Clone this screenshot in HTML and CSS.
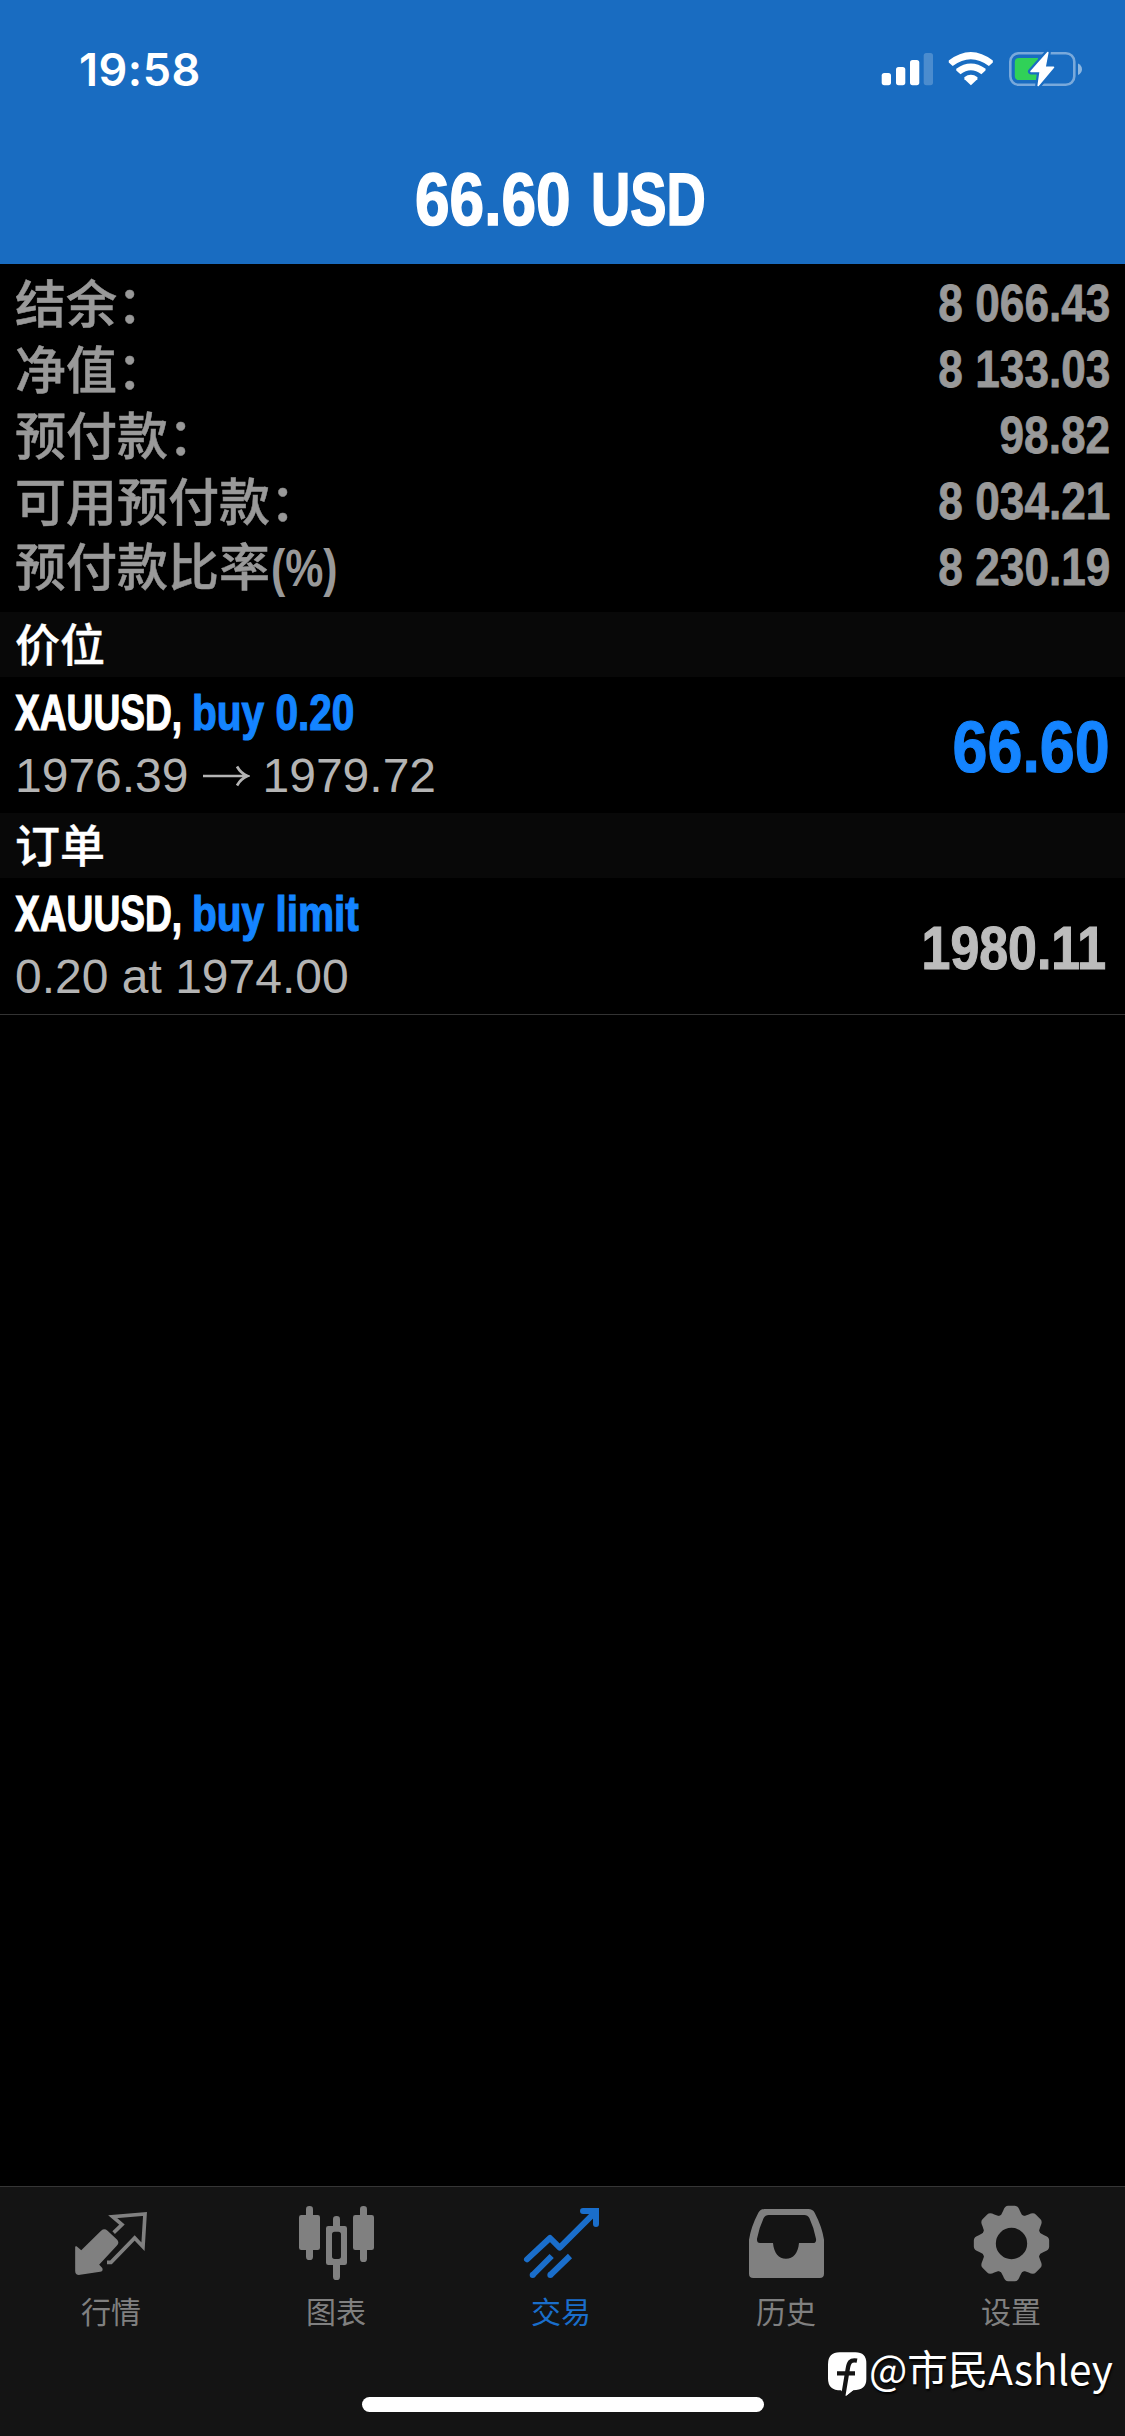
FILE: index.html
```html
<!DOCTYPE html>
<html lang="zh-CN">
<head>
<meta charset="utf-8">
<title>66.60 USD</title>
<link rel="stylesheet" href="styles.css">
</head>
<body>
<div class="screen">
  <header class="header">
    <div class="status">
      <span class="time">19:58</span>
      <svg class="status-icons" width="205" height="40" viewBox="880 49 205 40">
        <g fill="#fff">
          <rect x="881.700" y="73" width="9.300" height="12.200" rx="2.600"/>
          <rect x="896" y="67" width="9.300" height="18.200" rx="2.600"/>
          <rect x="910" y="60" width="9.300" height="25.200" rx="2.600"/>
          <rect x="923.700" y="53" width="9.300" height="32.200" rx="2.600" opacity=".22"/>
        </g>
        <g fill="#fff" transform="translate(970.800 0) scale(1.070 1) translate(-941.600 0)">
          <path d="M921 60.500Q941.600 43.500 962.200 60.500L962.200 62.500L958.500 66Q941.600 52.500 924.700 66L921 62.500Z"/>
          <path d="M928 68.800Q941.600 58 955.500 68.800L955.300 70.600L951.500 74.200Q941.600 66.500 932 74.200L928 70.600Z"/>
          <path d="M935.500 77.200Q941.600 72.300 947.900 77.200L947.700 79.300L941.700 85.300L935.700 79.300Z"/>
        </g>
        <rect x="1010.300" y="53.200" width="64" height="31.600" rx="8.500" fill="none" stroke="#fff" stroke-opacity=".42" stroke-width="2.600"/>
        <path d="M1078 63.500Q1082 65.500 1082 69.200T1078 75Z" fill="#fff" opacity=".5"/>
        <path d="M1019 58H1038V80H1019Q1014.800 80 1014.800 76V62Q1014.800 58 1019 58Z" fill="#30d158"/>
        <path d="M1047.800 52.500L1031 71.500H1040.200L1038.200 85.500L1053.500 67.300H1045Z" fill="#fff" stroke="#196cc1" stroke-width="6" stroke-linejoin="round"/>
        <path d="M1047.800 52.500L1031 71.500H1040.200L1038.200 85.500L1053.500 67.300H1045Z" fill="#fff" stroke="#fff" stroke-width="1.600" stroke-linejoin="round"/>
      </svg>
    </div>
    <h1 class="title"><span class="amount">66.60</span><span class="currency">USD</span></h1>
  </header>

  <main class="content">
    <dl class="summary">
      <div class="line"><dt>结余：</dt><dd>8 066.43</dd></div>
      <div class="line"><dt>净值：</dt><dd>8 133.03</dd></div>
      <div class="line"><dt>预付款：</dt><dd>98.82</dd></div>
      <div class="line"><dt>可用预付款：</dt><dd>8 034.21</dd></div>
      <div class="line"><dt>预付款比率<span class="unit">(%)</span></dt><dd>8 230.19</dd></div>
    </dl>

    <h2 class="section">价位</h2>
    <div class="row">
      <div class="info">
        <div class="name"><span class="symbol">XAUUSD,</span><span class="side">buy 0.20</span></div>
        <div class="detail"><span>1976.39</span><svg class="arrow" width="48" height="24" viewBox="0 0 48 24" fill="none" stroke="#b4b4b4" stroke-width="2.700"><path d="M1 12H45M35 2.500Q39 9.500 45.500 12Q39 14.500 35 21.500"/></svg><span>1979.72</span></div>
      </div>
      <div class="value profit">66.60</div>
    </div>

    <h2 class="section">订单</h2>
    <div class="row last">
      <div class="info">
        <div class="name"><span class="symbol">XAUUSD,</span><span class="side">buy limit</span></div>
        <div class="detail">0.20 at 1974.00</div>
      </div>
      <div class="value price">1980.11</div>
    </div>
  </main>

  <nav class="tabs">
    <div class="tab">
      <svg class="icon" viewBox="0 75 675 270">
        <path d="M228 231L244 244L305 184Q313 177 321 184L349 210Q356 217 349 225L294 284L305 296Q307 302 300 303L240 312Q228 314 228 303Z" fill="currentColor" stroke="currentColor" stroke-width="5" stroke-linejoin="round"/>
        <path d="M341 188L366 164L338 140L435 132L429 230L404 204L333 277H321" fill="none" stroke="currentColor" stroke-width="11"/>
      </svg>
      <span>行情</span>
    </div>
    <div class="tab">
      <svg class="icon" viewBox="675 75 675 270" fill="currentColor">
        <rect x="918" y="108" width="21" height="162" rx="10"/><rect x="897" y="135" width="63" height="105" rx="7"/>
        <rect x="1080" y="108" width="21" height="168" rx="10"/><rect x="1059" y="135" width="63" height="105" rx="7"/>
        <rect x="999" y="138" width="21" height="45" rx="10"/><rect x="999" y="270" width="21" height="60" rx="10"/>
        <path fill-rule="evenodd" d="M985 168H1034Q1041 168 1041 175V278Q1041 285 1034 285H985Q978 285 978 278V175Q978 168 985 168ZM1004 185Q996 185 996 193V259Q996 267 1004 267H1015Q1023 267 1023 259V193Q1023 185 1015 185Z"/>
      </svg>
      <span>图表</span>
    </div>
    <div class="tab active">
      <svg class="icon" viewBox="90 75 675 270" fill="none" stroke="currentColor" stroke-width="18">
        <path d="M321 268L390 204L419 233L522 130" stroke-linejoin="round" stroke-linecap="round"/>
        <path d="M489 123H528V162" stroke-linecap="round"/>
        <path d="M395 258L338 315M450 258L391 315"/>
        <g fill="currentColor" stroke="none"><circle cx="338" cy="315" r="9"/><circle cx="391" cy="315" r="9"/></g>
      </svg>
      <span>交易</span>
    </div>
    <div class="tab">
      <svg class="icon" viewBox="765 75 675 270" fill="currentColor">
        <path fill-rule="evenodd" d="M1034 117H1165Q1178 117 1184 128Q1206 170 1212 209V311Q1212 324 1199 324H1000Q987 324 987 311V209Q993 170 1015 128Q1021 117 1034 117ZM1046 135Q1036 135 1031 144Q1017 174 1011 206Q1010 219 1020 219H1059C1062 250 1076 266 1098 266S1134 250 1137 219H1179Q1190 219 1188 206Q1182 174 1168 144Q1163 135 1153 135Z"/>
      </svg>
      <span>历史</span>
    </div>
    <div class="tab">
      <svg class="icon" viewBox="360 75 675 270">
        <g transform="translate(694.500 220.500)" fill="currentColor">
          <circle r="69" fill="none" stroke="currentColor" stroke-width="44"/>
          <path id="tooth" d="M-38 -78Q-30 -85 -25 -98Q-20 -113 -10 -113H10Q20 -113 25 -98Q30 -85 38 -78Z"/>
          <use href="#tooth" transform="rotate(45)"/><use href="#tooth" transform="rotate(90)"/><use href="#tooth" transform="rotate(135)"/><use href="#tooth" transform="rotate(180)"/><use href="#tooth" transform="rotate(225)"/><use href="#tooth" transform="rotate(270)"/><use href="#tooth" transform="rotate(315)"/>
        </g>
      </svg>
      <span>设置</span>
    </div>
  </nav>

  <div class="watermark">
    <svg width="40" height="48" viewBox="140 545 120 144">
      <path d="M178 549H225Q258 549 258 582V630Q258 663 218 663L196 680L182 663Q143 663 143 628V585Q143 549 178 549Z" fill="#fff"/>
      <path d="M230 574C209 570 205 580 202 600L188 684M170 612H224" fill="none" stroke="#141414" stroke-width="13"/>
      <path d="M197 680L206 652L222 660Z" fill="#fff"/>
    </svg>
    <span>@市民Ashley</span>
  </div>
  <div class="home"></div>
</div>
</body>
</html>
```
FILE: styles.css
```css
* { box-sizing: border-box; margin: 0; padding: 0; }

body { background: #000; }

.screen {
  position: relative;
  width: 1125px;
  height: 2436px;
  display: flex;
  flex-direction: column;
  background: #000;
  overflow: hidden;
  font-family: "Liberation Sans", "Noto Sans CJK SC", sans-serif;
  white-space: nowrap;
}

.header { height: 264px; background: #196cc1; color: #fff; }

.status {
  height: 132px;
  padding: 0 40px 0 79px;
  display: flex;
  justify-content: space-between;
  align-items: flex-start;
}
.time {
  padding-top: 43px;
  font: 600 45px/54px Inter, sans-serif;
  letter-spacing: .5px;
}
.status-icons { margin-top: 49px; }

.title {
  height: 132px;
  padding: 24px 0 0 415px;
  display: flex;
  font-size: 74px;
  line-height: 88px;
  -webkit-text-stroke: 1.6px currentColor;
}
/* Both parts are condensed from the left edge of a fixed-width box. */
.title span { flex: none; transform-origin: left; }
.amount { width: 176px; transform: scaleX(.84); }
.currency { transform: scaleX(.735); }

.content { flex: 1; }

.summary { height: 348px; padding: 6px 15px 0; color: #999; }
.line {
  height: 66px;
  display: flex;
  justify-content: space-between;
  align-items: center;
}
dt {
  margin-top: -5px;
  font: 500 51px/66px "Noto Sans CJK SC", sans-serif;
  -webkit-text-stroke: .5px #999;
}
.unit {
  display: inline-block;
  margin-left: 1px;
  font: 700 51px/60px "Liberation Sans", sans-serif;
  -webkit-text-stroke: 0;
  transform: scaleX(.84);
  transform-origin: left;
}
dd {
  font-weight: 700;
  font-size: 52px;
  line-height: 66px;
  -webkit-text-stroke: .8px currentColor;
  transform: scaleX(.85);
  transform-origin: right;
}

.section {
  height: 65px;
  padding-left: 15px;
  background: #080808;
  color: #fff;
  font: 500 45px/62px "Noto Sans CJK SC", sans-serif;
  -webkit-text-stroke: .4px #fff;
}

.row {
  height: 136px;
  padding: 0 15px;
  display: flex;
  justify-content: space-between;
}
.row.last { height: 137px; border-bottom: 1px solid #333; }
.info { padding-top: 5px; }
.name {
  display: flex;
  font-weight: 700;
  font-size: 49.500px;
  line-height: 62px;
  -webkit-text-stroke: 1.2px currentColor;
}
.symbol, .side { flex: none; transform-origin: left; }
.symbol { width: 177px; color: #fff; transform: scaleX(.75); }
.side { color: #1484ff; -webkit-text-stroke-color: #1484ff; transform: scaleX(.82); }
.detail {
  display: flex;
  align-items: center;
  font-size: 48px;
  line-height: 64px;
  color: #b4b4b4;
  white-space: pre;
}
.arrow { margin: 0 13px; }
.value {
  font-weight: 700;
  line-height: 139px;
  -webkit-text-stroke: 1.2px currentColor;
  transform: scaleX(.86);
  transform-origin: right;
}
.profit { font-size: 73px; color: #1484ff; }
.price { margin-right: 4px; font-size: 61px; line-height: 141px; color: #bcbcbc; transform: scaleX(.85); }

.tabs {
  height: 250px;
  display: grid;
  grid-template-columns: repeat(5, 225px);
  background: #141414;
  border-top: 1px solid #363636;
  color: #808080;
}
.tab {
  padding-top: 8px;
  display: flex;
  flex-direction: column;
  align-items: center;
}
.tab.active { color: #1a6ecb; }
.icon { width: 225px; height: 90px; }
.tab span {
  margin: 3px 3px 0 0;
  font: 400 30px/44px "Noto Sans CJK SC", sans-serif;
}

.watermark {
  position: absolute;
  left: 827px;
  top: 2337px;
  display: flex;
  align-items: center;
  color: #fff;
  font: 400 40.500px/60px "Noto Sans CJK SC", sans-serif;
  text-shadow: 1px 2px 2px #000;
}
.watermark svg { margin: 14px 2px 0 0; }

.home {
  position: absolute;
  left: 362px;
  top: 2397px;
  width: 402px;
  height: 15px;
  border-radius: 8px;
  background: #fff;
}
```
